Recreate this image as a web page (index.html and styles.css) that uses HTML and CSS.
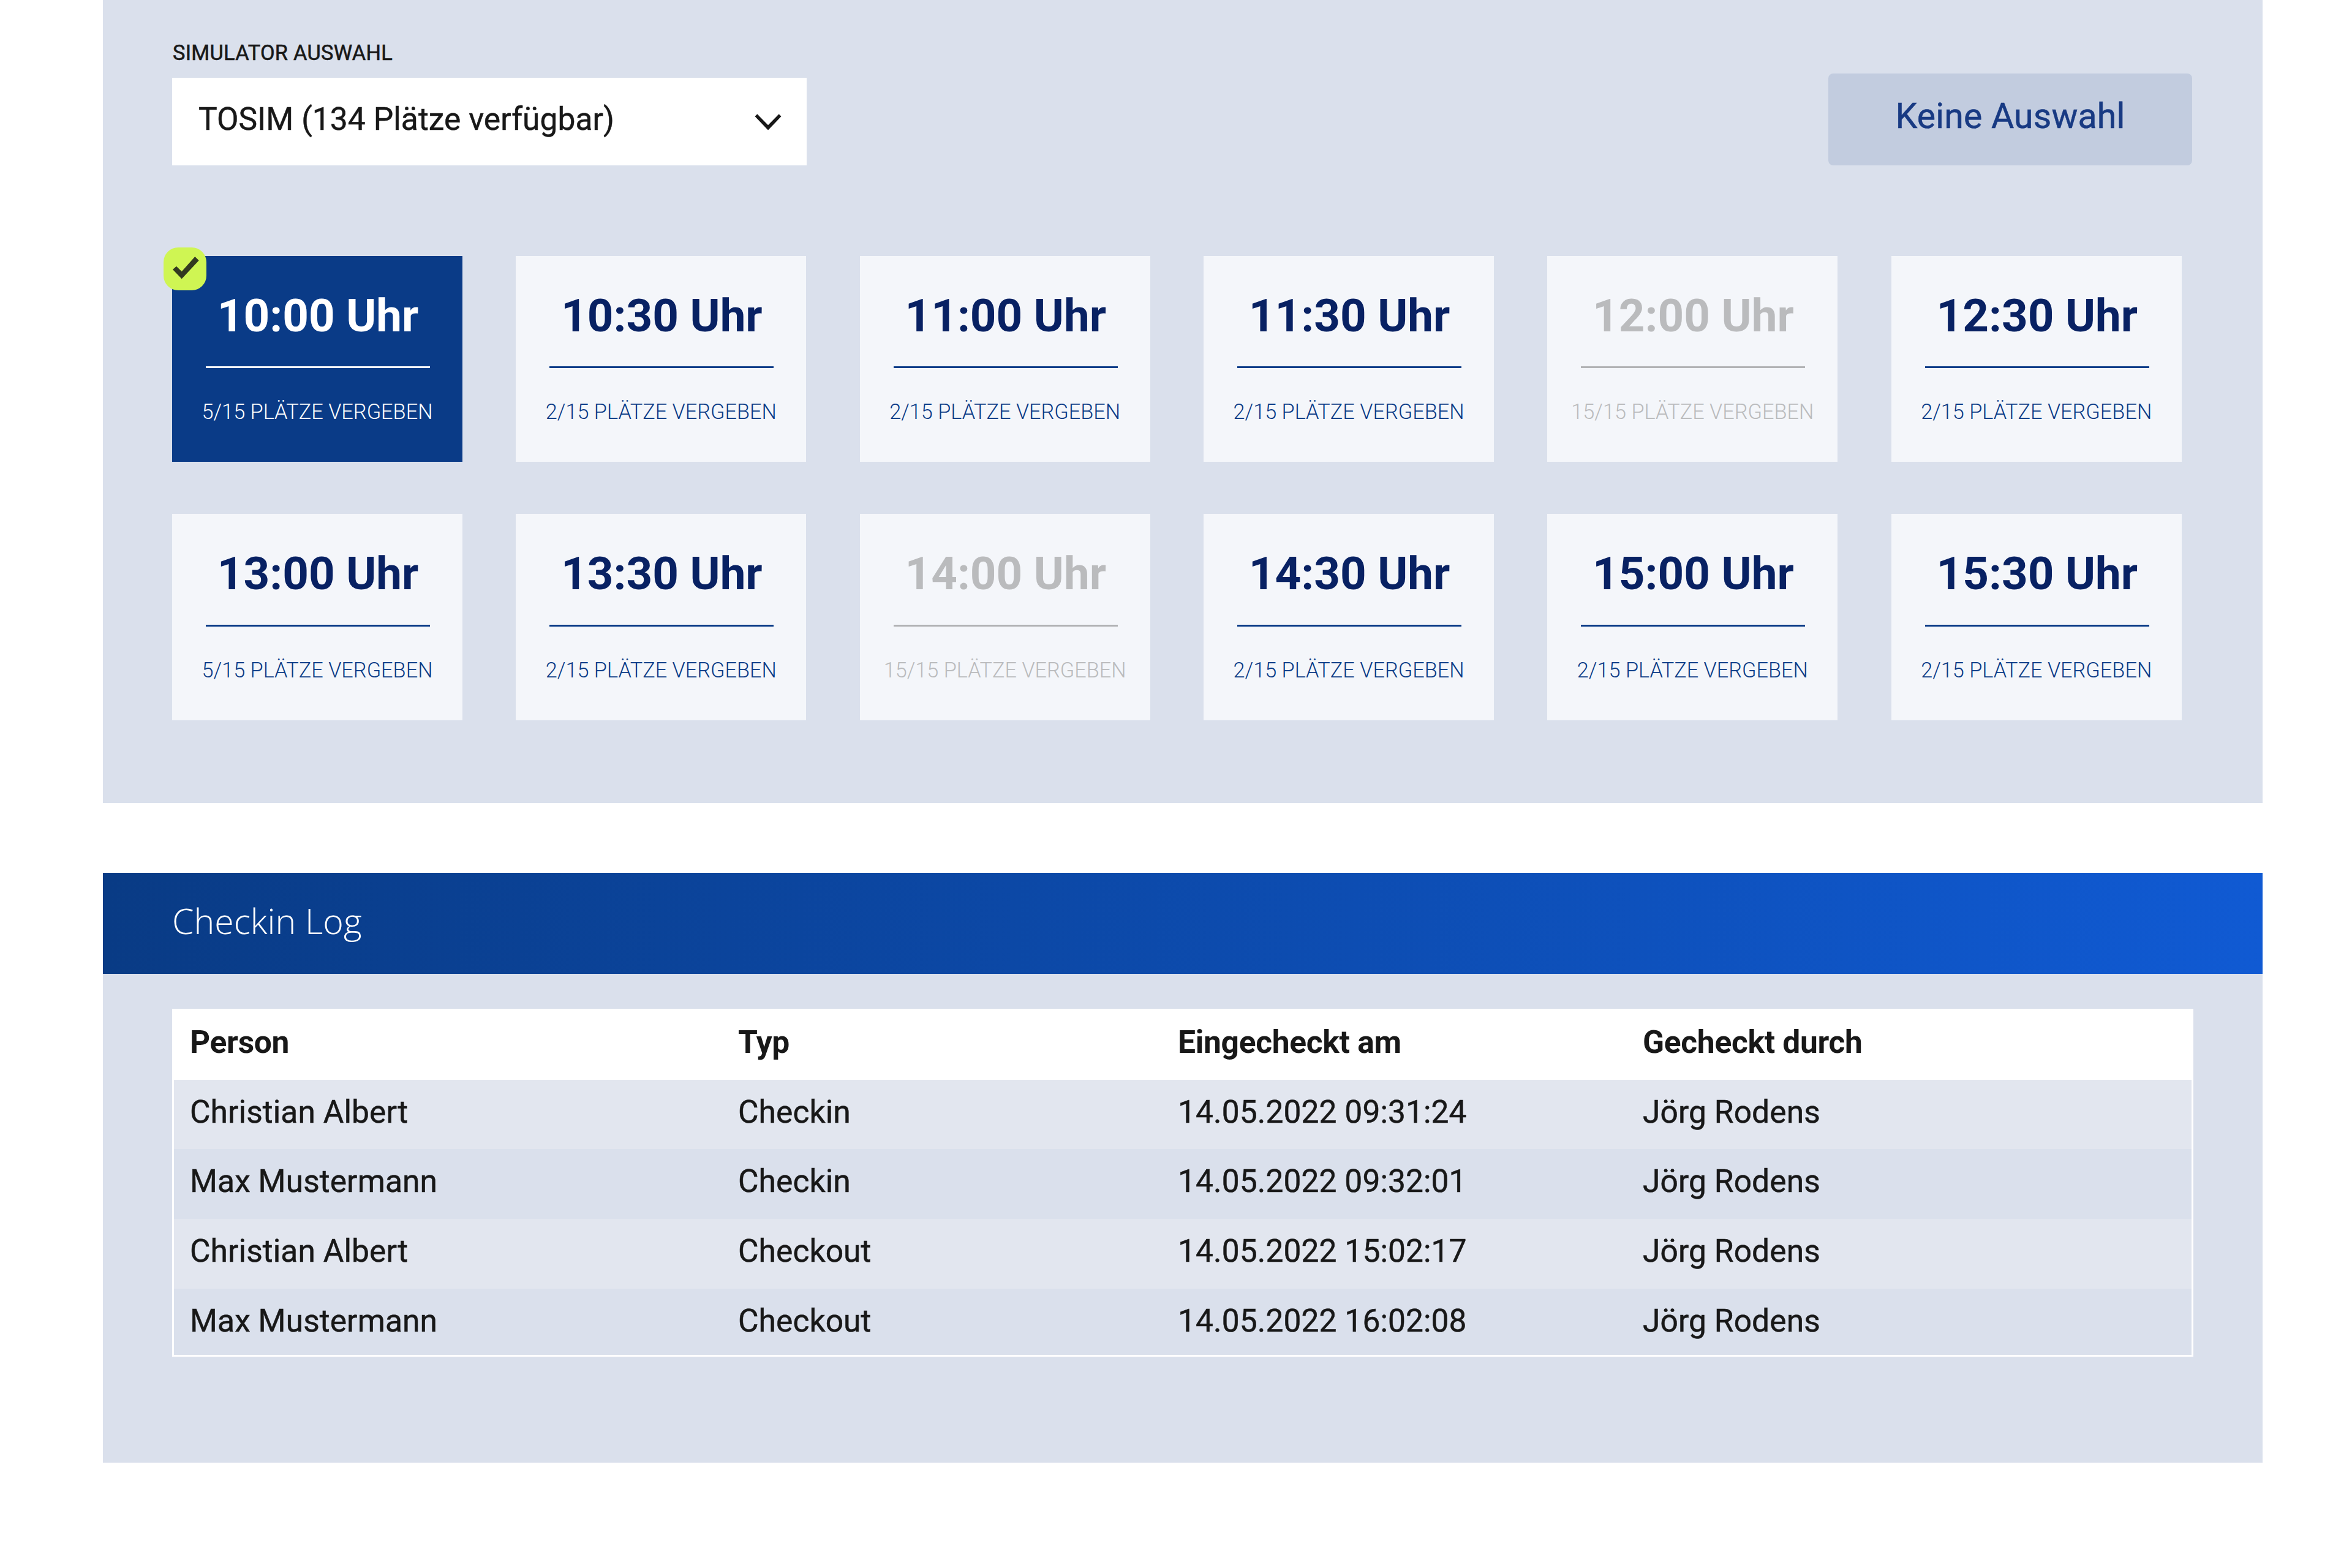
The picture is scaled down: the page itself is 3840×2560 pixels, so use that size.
FILE: index.html
```
<!DOCTYPE html>
<html lang="de">
<head>
  <meta charset="UTF-8">
  <title>Checkin</title>
  <link rel="stylesheet" href="styles.css">
</head>
<body>
  <section class="panel panel-slots">
    <div class="toolbar">
      <div class="field">
        <div class="field-label">SIMULATOR AUSWAHL</div>
        <div class="select">
          <span class="select-text">TOSIM (134 Plätze verfügbar)</span>
          <svg class="chevron" viewBox="0 0 44 27"><path d="M0.5 4 L4.3 0.2 L22 18.2 L39.7 0.2 L43.5 4 L22 26.4 Z"/></svg>
        </div>
      </div>
      <button class="btn" type="button">Keine Auswahl</button>
    </div>
    <div id="slots" class="slots"></div>
  </section>

  <section class="panel panel-log">
    <h2 class="panel-header">Checkin Log</h2>
    <table class="log">
      <thead>
        <tr><th>Person</th><th>Typ</th><th>Eingecheckt am</th><th>Gecheckt durch</th></tr>
      </thead>
      <tbody>
        <tr><td>Christian Albert</td><td>Checkin</td><td>14.05.2022 09:31:24</td><td>Jörg Rodens</td></tr>
        <tr><td>Max Mustermann</td><td>Checkin</td><td>14.05.2022 09:32:01</td><td>Jörg Rodens</td></tr>
        <tr><td>Christian Albert</td><td>Checkout</td><td>14.05.2022 15:02:17</td><td>Jörg Rodens</td></tr>
        <tr><td>Max Mustermann</td><td>Checkout</td><td>14.05.2022 16:02:08</td><td>Jörg Rodens</td></tr>
      </tbody>
    </table>
  </section>

  <script>
    const slots = [
      { time: "10:00", taken: 5, selected: true },
      { time: "10:30", taken: 2 },
      { time: "11:00", taken: 2 },
      { time: "11:30", taken: 2 },
      { time: "12:00", taken: 15 },
      { time: "12:30", taken: 2 },
      { time: "13:00", taken: 5 },
      { time: "13:30", taken: 2 },
      { time: "14:00", taken: 15 },
      { time: "14:30", taken: 2 },
      { time: "15:00", taken: 2 },
      { time: "15:30", taken: 2 }
    ];
    const total = 15;
    const container = document.getElementById("slots");

    slots.forEach(slot => {
      const div = document.createElement("div");
      div.className = "slot";
      if (slot.selected) div.classList.add("selected");
      // Fully booked slots are greyed out
      if (slot.taken === total) div.classList.add("full");
      div.innerHTML = `
        <div class="slot-time">${slot.time} Uhr</div>
        <div class="slot-count">${slot.taken}/${total} PLÄTZE VERGEBEN</div>`;
      if (slot.selected) {
        div.innerHTML += `<span class="badge"><svg viewBox="0 0 70 70"><path d="M15 36 L21 30.7 L29.7 39.3 L51.3 15 L57.7 21.3 L29.7 51.3 Z"/></svg></span>`;
      }
      container.appendChild(div);
    });
  </script>
</body>
</html>
```
FILE: styles.css
```
* {
  box-sizing: border-box;
}

body {
  margin: 0;
  background: #fff;
  font-family: Roboto, sans-serif;
  color: #181818;
}

.panel {
  width: 3526px;
  margin-left: 167.5px;
  background: #dae0ec;
}

.panel-slots {
  height: 1311px;
  padding: 66px 114.5px 0 113.5px;
}

/* Simulator selection */
.toolbar {
  display: flex;
  justify-content: space-between;
  align-items: flex-end;
}

.field-label {
  padding-left: 1px;
  font-size: 34.3px;
  line-height: 40px;
  letter-spacing: 0.3px;
  margin-bottom: 21.3px;
  -webkit-text-stroke: 0.6px;
}

.select {
  display: flex;
  align-items: center;
  justify-content: space-between;
  width: 1036px;
  height: 142.7px;
  padding: 0 41px 0 43px;
  background: #fff;
  font-size: 51.5px;
  letter-spacing: 0.06px;
}

.select-text {
  padding-bottom: 8px;
  -webkit-text-stroke: 0.5px;
}

.chevron {
  width: 44px;
  height: 27px;
  margin-top: 2px;
}

.chevron path {
  fill: #181818;
}

.btn {
  width: 594px;
  height: 150px;
  padding: 0 0 11px;
  border: 0;
  border-radius: 8px;
  background: #c2ccdf;
  color: #183a83;
  font-family: inherit;
  font-size: 57.2px;
  letter-spacing: 0.15px;
  -webkit-text-stroke: 0.5px;
}

/* Time slots */
.slots {
  display: grid;
  grid-template-columns: repeat(6, 474px);
  gap: 85px 87.35px;
  margin-top: 148px;
}

.slot {
  position: relative;
  height: 336.3px;
  padding-top: 54px;
  background: #f4f6fa;
  color: #0a3b87;
  text-align: center;
}

.slot-time {
  width: 366px;
  height: 129.5px;
  margin: 0 53px 0 55px;
  border-bottom: 3px solid #0a3b87;
  color: #082163;
  font-size: 74.5px;
  font-weight: 700;
  line-height: 88px;
}

.slot-count {
  margin-top: 50.8px;
  font-size: 34.3px;
  font-weight: 300;
  line-height: 40px;
}

.slot.selected {
  background: #0a3b87;
  color: #fff;
}

.slot.selected .slot-time {
  border-color: #fff;
  color: #fff;
}

.slot.full,
.slot.full .slot-time {
  color: #babbbd;
}

.slot.full .slot-time {
  border-color: #b1b2b4;
}

.badge {
  position: absolute;
  top: -14px;
  left: -14px;
  width: 70px;
  height: 70px;
  border-radius: 24px;
  background: #cff553;
}

.badge svg {
  display: block;
}

.badge path {
  fill: #333920;
}

/* Checkin log */
.panel-log {
  height: 963.5px;
  margin-top: 113.5px;
}

.panel-header {
  height: 165.3px;
  margin: 0 0 57.5px;
  padding-left: 113.5px;
  background: linear-gradient(to right, #093b85, #105ad3);
  color: #fff;
  font-family: "Open Sans", sans-serif;
  font-size: 57.2px;
  font-weight: 300;
  line-height: 157px;
}

.log {
  display: block;
  width: 3300px;
  height: 568px;
  margin-left: 113.5px;
  border: 3px solid #fff;
  overflow: hidden;
  font-size: 51.5px;
}

.log thead,
.log tbody {
  display: block;
}

.log tr {
  display: grid;
  grid-template-columns: 895px 718px 759px 1fr;
  height: 113.7px;
  padding-left: 26px;
  line-height: 105px;
}

.log thead tr {
  background: #fff;
  height: 112.3px;
  line-height: 104px;
}

.log tbody tr:nth-child(odd) {
  background: #e2e6ef;
}

.log th,
.log td {
  padding: 0;
  text-align: left;
}

.log th {
  letter-spacing: -0.3px;
}

.log td {
  letter-spacing: 0.08px;
  -webkit-text-stroke: 0.5px;
}
```
